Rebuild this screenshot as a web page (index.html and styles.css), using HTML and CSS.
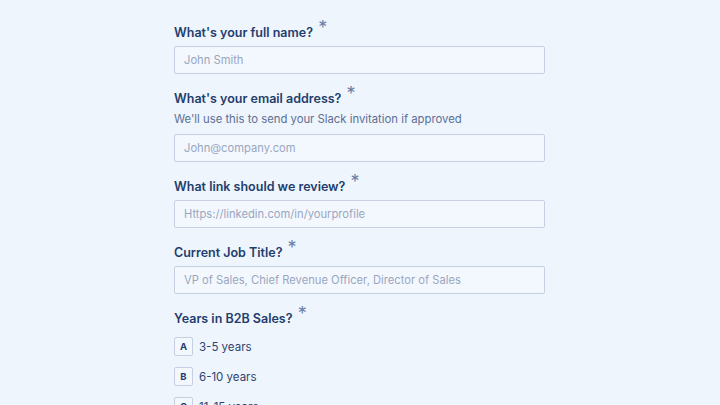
FILE: index.html
```html
<!DOCTYPE html>
<html lang="en">
    <head>
        <meta charset="UTF-8">
        <meta name="viewport" content="width=device-width, initial-scale=1.0">
        <title>Apply</title>
        <link rel="stylesheet" href="styles.css">
    </head>
    <body>
        <div class="form">
            <div class="field">
                <label class="question">What's your full name? <span class="req">*</span></label>
                <input class="answer" type="text" placeholder="John Smith">
            </div>
            <div class="field">
                <label class="question">What's your email address? <span class="req">*</span></label>
                <div class="help">We'll use this to send your Slack invitation if approved</div>
                <input class="answer" type="text" placeholder="John@company.com">
            </div>
            <div class="field">
                <label class="question">What link should we review? <span class="req">*</span></label>
                <input class="answer" type="text" placeholder="Https://linkedin.com/in/yourprofile">
            </div>
            <div class="field">
                <label class="question">Current Job Title? <span class="req">*</span></label>
                <input class="answer" type="text" placeholder="VP of Sales, Chief Revenue Officer, Director of Sales">
            </div>
            <div class="field">
                <label class="question">Years in B2B Sales? <span class="req">*</span></label>
                <div class="choices">
                    <div class="choice"><span class="key">A</span>3-5 years</div>
                    <div class="choice"><span class="key">B</span>6-10 years</div>
                    <div class="choice"><span class="key">C</span>11-15 years</div>
                    <div class="choice"><span class="key">D</span>15+ years</div>
                </div>
            </div>
        </div>
    </body>
</html>
```

FILE: styles.css
```css
/* Page */
body {
    margin: 0;
    background-color: #eef5fc;
    font-family: "Inter", "Noto Sans", sans-serif;
    color: #233d6e;
}

/* Form column */
.form {
    width: 371px;
    margin-left: 174px;
    padding-top: 23px;
}

.field {
    display: flex;
    flex-direction: column;
    margin-bottom: 15px;
}

/* Question labels */
.question {
    display: block;
    height: 20px;
    line-height: 20px;
    font-size: 12.5px;
    font-weight: 600;
    color: #233d6e;
    margin-bottom: 3px;
}

.req {
    display: inline-block;
    font-size: 18px;
    font-weight: 400;
    color: #6b7fa8;
    line-height: 10px;
    vertical-align: 3px;
    margin-left: 2px;
}

.help {
    font-size: 11.3px;
    line-height: 18px;
    color: #5c6f96;
    margin-top: -2px;
    margin-bottom: 6px;
}

/* Text inputs */
.answer {
    box-sizing: border-box;
    width: 100%;
    height: 28px;
    padding: 0 9px;
    border: 1px solid #c6d0e1;
    border-radius: 2px;
    background-color: #f3f8fe;
    font-family: inherit;
    font-size: 11.2px;
    color: #233d6e;
    outline: none;
}

.answer::placeholder {
    color: #9aa6bf;
}

/* Multiple choice */
.choices {
    display: flex;
    flex-direction: column;
    gap: 11px;
    margin-top: 5px;
}

.choice {
    display: flex;
    align-items: center;
    font-size: 11.5px;
    color: #2f4472;
}

.key {
    box-sizing: border-box;
    width: 19px;
    height: 19px;
    margin-right: 6px;
    border: 1px solid #c6d0e1;
    border-radius: 2px;
    background-color: #f3f8fe;
    display: flex;
    align-items: center;
    justify-content: center;
    font-size: 9.5px;
    font-weight: 700;
    color: #233d6e;
}
```
